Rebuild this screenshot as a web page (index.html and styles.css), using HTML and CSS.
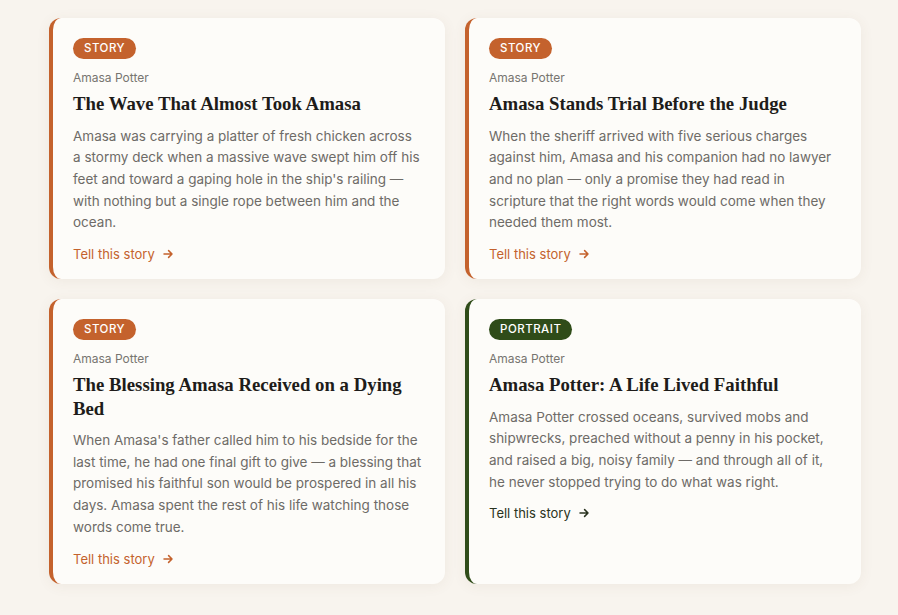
FILE: index.html
```html
<!DOCTYPE html>
<html lang="en">
<head>
<meta charset="utf-8">
<title>Amasa Potter Stories</title>
<link rel="stylesheet" href="styles.css">
</head>
<body>
<main class="grid">
  <article class="card card-story">
    <span class="pill">Story</span>
    <p class="author">Amasa Potter</p>
    <h3 class="title">The Wave That Almost Took Amasa</h3>
    <p class="desc">Amasa was carrying a platter of fresh chicken across a stormy deck when a massive wave swept him off his feet and toward a gaping hole in the ship's railing — with nothing but a single rope between him and the ocean.</p>
    <a class="link" href="#">Tell this story <svg class="arrow" viewBox="0 0 10 10" width="10" height="10"><path d="M1 5H9M5.6 1.6L9 5L5.6 8.4" fill="none" stroke="currentColor" stroke-width="1.5" stroke-linecap="round" stroke-linejoin="round"/></svg></a>
  </article>
  <article class="card card-story">
    <span class="pill">Story</span>
    <p class="author">Amasa Potter</p>
    <h3 class="title">Amasa Stands Trial Before the Judge</h3>
    <p class="desc">When the sheriff arrived with five serious charges against him, Amasa and his companion had no lawyer and no plan — only a promise they had read in scripture that the right words would come when they needed them most.</p>
    <a class="link" href="#">Tell this story <svg class="arrow" viewBox="0 0 10 10" width="10" height="10"><path d="M1 5H9M5.6 1.6L9 5L5.6 8.4" fill="none" stroke="currentColor" stroke-width="1.5" stroke-linecap="round" stroke-linejoin="round"/></svg></a>
  </article>
  <article class="card card-story">
    <span class="pill">Story</span>
    <p class="author">Amasa Potter</p>
    <h3 class="title">The Blessing Amasa Received on a Dying Bed</h3>
    <p class="desc">When Amasa's father called him to his bedside for the last time, he had one final gift to give — a blessing that promised his faithful son would be prospered in all his days. Amasa spent the rest of his life watching those words come true.</p>
    <a class="link" href="#">Tell this story <svg class="arrow" viewBox="0 0 10 10" width="10" height="10"><path d="M1 5H9M5.6 1.6L9 5L5.6 8.4" fill="none" stroke="currentColor" stroke-width="1.5" stroke-linecap="round" stroke-linejoin="round"/></svg></a>
  </article>
  <article class="card card-portrait">
    <span class="pill">Portrait</span>
    <p class="author">Amasa Potter</p>
    <h3 class="title">Amasa Potter: A Life Lived Faithful</h3>
    <p class="desc">Amasa Potter crossed oceans, survived mobs and shipwrecks, preached without a penny in his pocket, and raised a big, noisy family — and through all of it, he never stopped trying to do what was right.</p>
    <a class="link" href="#">Tell this story <svg class="arrow" viewBox="0 0 10 10" width="10" height="10"><path d="M1 5H9M5.6 1.6L9 5L5.6 8.4" fill="none" stroke="currentColor" stroke-width="1.5" stroke-linecap="round" stroke-linejoin="round"/></svg></a>
  </article>
</main>
</body>
</html>
```

FILE: styles.css
```css
* { box-sizing: border-box; }

html, body {
  margin: 0;
  padding: 0;
  background: #f8f4ee;
}

body {
  font-family: "Inter", "Liberation Sans", sans-serif;
  color: #222;
}

.grid {
  display: grid;
  grid-template-columns: 396px 396px;
  gap: 20px;
  padding: 18px 0 32px 49px;
}

.card {
  display: flex;
  flex-direction: column;
  align-items: flex-start;
  background: #fdfcf9;
  border-radius: 12px;
  border-left: 4px solid #c4622d;
  padding: 20px 22px 15px 20px;
  box-shadow: 0 2px 14px rgba(120, 90, 60, 0.07);
}

.card-portrait { border-left-color: #2f4c19; }

.pill {
  display: inline-block;
  background: #c4622d;
  color: #fff;
  font-size: 11.5px;
  font-weight: 500;
  letter-spacing: 0.5px;
  text-transform: uppercase;
  line-height: 21px;
  height: 21px;
  padding: 0 11px;
  border-radius: 999px;
}

.card-portrait .pill { background: #2f4c19; }

.author {
  margin: 10px 0 0;
  font-size: 12px;
  line-height: 18px;
  color: #777570;
}

.title {
  margin: 5px 0 0;
  font-family: "Liberation Serif", "DejaVu Serif", serif;
  font-weight: 700;
  font-size: 18.8px;
  line-height: 23.5px;
  color: #1e1c1a;
}

.desc {
  margin: 10px 0 0;
  font-size: 13.5px;
  line-height: 21.7px;
  color: #6e6b67;
}

.link {
  display: inline-flex;
  align-items: center;
  gap: 8px;
  margin-top: 10px;
  font-size: 13px;
  line-height: 20px;
  color: #c4622d;
  text-decoration: none;
}

.card-portrait .link { color: #2a3320; }

.arrow { display: block; }
```
